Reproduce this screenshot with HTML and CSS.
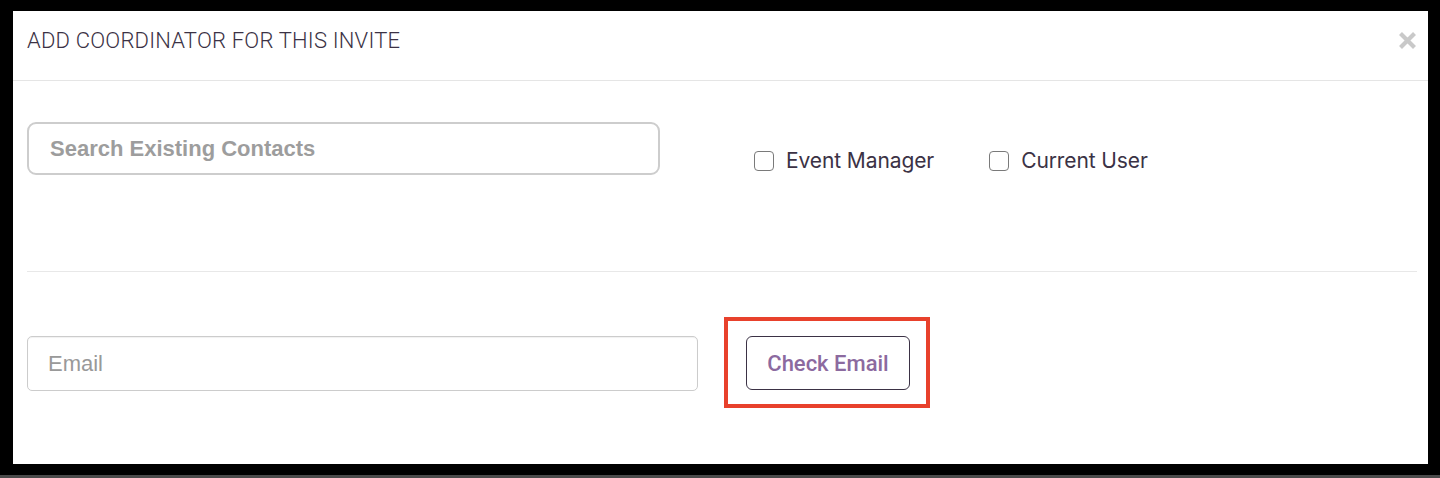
FILE: index.html
```html
<!DOCTYPE html>
<html>
<head>
<meta charset="utf-8">
<link rel="stylesheet" href="styles.css">
</head>
<body>
<div class="backdrop">
  <div class="modal">
    <div class="modal-header">
      <h4 class="modal-title">ADD COORDINATOR FOR THIS INVITE</h4>
      <button class="close" aria-label="Close">
        <svg width="19" height="19" viewBox="0 0 19 19"><path d="M2.5 2.5 L16.5 16.5 M16.5 2.5 L2.5 16.5" stroke="#c9c9c9" stroke-width="4.2" stroke-linecap="butt"/></svg>
      </button>
    </div>
    <div class="modal-body">
      <div class="row-top">
        <input class="search" type="text" placeholder="Search Existing Contacts">
        <div class="checks">
          <label class="check"><span class="box"></span>Event Manager</label>
          <label class="check"><span class="box"></span>Current User</label>
        </div>
      </div>
      <hr class="divider">
      <div class="row-email">
        <input class="email" type="text" placeholder="Email">
        <div class="btn-wrap">
          <button class="btn-check">Check Email</button>
          <span class="highlight"></span>
        </div>
      </div>
    </div>
  </div>
</div>
<div class="floor"></div>
</body>
</html>
```

FILE: styles.css
```css
html, body {
  margin: 0;
  padding: 0;
  background: #000;
  height: 478px;
  overflow: hidden;
}
.backdrop {
  padding: 11px 12px 0 13px;
  height: 464px;
  box-sizing: border-box;
}
.floor {
  height: 3px;
  margin-top: 11px;
  background: #4a4a4a;
}
.modal {
  background: #fff;
  height: 453px;
  box-sizing: border-box;
}
.modal-header {
  height: 70px;
  box-sizing: border-box;
  border-bottom: 1px solid #e5e5e5;
  display: flex;
  align-items: center;
  justify-content: space-between;
  padding: 0 11px 10px 14px;
}
.modal-title {
  margin: 0;
  font-family: Roboto, "Liberation Sans", sans-serif;
  font-weight: 300;
  font-size: 22px;
  letter-spacing: 0.2px;
  color: #3b3245;
  line-height: 26px;
}
.close {
  background: none;
  border: 0;
  padding: 0;
  margin: 0;
  width: 19px;
  height: 19px;
  display: block;
}
.close svg { display: block; }
.modal-body {
  padding: 41px 11px 0 14px;
}
.row-top {
  display: flex;
  align-items: flex-start;
}
.search {
  width: 633px;
  height: 53px;
  box-sizing: border-box;
  border: 2px solid #cdcdcd;
  border-radius: 9px;
  padding: 0 21px;
  font-family: "Liberation Sans", Arial, sans-serif;
  font-weight: 700;
  font-size: 22px;
  color: #555;
  outline: none;
}
.search::placeholder { color: #9d9d9d; }
.checks {
  display: flex;
  gap: 55px;
  margin-left: 94px;
  margin-top: 26px;
}
.check {
  display: flex;
  align-items: center;
  font-family: Inter, "Noto Sans", sans-serif;
  font-size: 21px;
  letter-spacing: -0.1px;
  color: #3b3245;
  line-height: 26px;
}
.box {
  width: 20px;
  height: 20px;
  border: 1.5px solid #7a7a7a;
  border-radius: 4px;
  box-sizing: border-box;
  margin-right: 12px;
}
.divider {
  border: 0;
  border-top: 1px solid #e8e8e8;
  margin: 96px 0 0 0;
}
.row-email {
  display: flex;
  align-items: flex-start;
  margin-top: 64px;
}
.email {
  width: 671px;
  height: 55px;
  box-sizing: border-box;
  border: 1px solid #cccccc;
  border-radius: 5px;
  padding: 0 20px;
  font-family: "Liberation Sans", Arial, sans-serif;
  font-size: 22px;
  color: #555;
  outline: none;
  box-shadow: inset 0 1px 1px rgba(0,0,0,0.06);
}
.email::placeholder { color: #999; }
.btn-wrap {
  position: relative;
  margin-left: 48px;
}
.btn-check {
  display: block;
  width: 164px;
  height: 54px;
  box-sizing: border-box;
  border: 1px solid #3b3245;
  border-radius: 6px;
  background: #fff;
  font-family: Roboto, "Liberation Sans", sans-serif;
  font-weight: 500;
  font-size: 22px;
  color: #8c6a9f;
  padding: 0;
}
.highlight {
  position: absolute;
  left: -22px;
  top: -19px;
  width: 206px;
  height: 91px;
  border: 4px solid #e8412c;
  box-sizing: border-box;
  pointer-events: none;
}
```
